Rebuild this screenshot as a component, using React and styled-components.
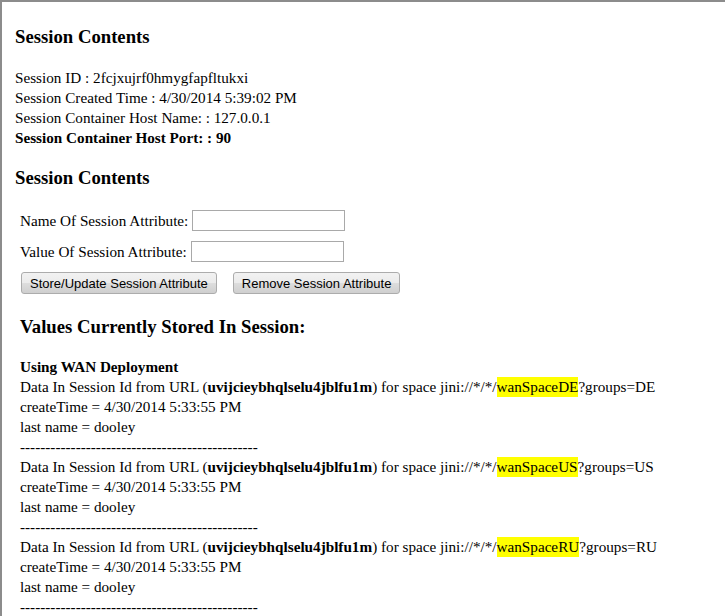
import React from "react";
import styled, { createGlobalStyle } from "styled-components";

const GlobalStyle = createGlobalStyle`
  html, body {
    margin: 0;
    padding: 0;
    background: #ffffff;
  }
  body {
    font-family: "Liberation Serif", "Times New Roman", serif;
    font-size: 15.2px;
    color: #000;
  }
`;

const Frame = styled.div`
  min-height: 100vh;
  box-sizing: border-box;
  border-top: 2px solid #8c8c8c;
  border-left: 2px solid #8c8c8c;
  padding: 24px 0 0 13px;
`;

const Heading = styled.h3`
  margin: ${(p) => p.$margin || "0"};
  font-size: 18.72px;
  line-height: 22px;
  font-weight: bold;
  padding-left: ${(p) => p.$indent || "0"};
`;

const Lines = styled.div`
  line-height: 20px;
  margin: ${(p) => p.$margin || "0"};
  padding-left: ${(p) => p.$indent || "0"};
`;

const Line = styled.div`
  font-weight: ${(p) => (p.$bold ? "bold" : "normal")};
  white-space: nowrap;
`;

const Form = styled.form`
  display: flex;
  flex-direction: column;
  gap: 10px;
  margin: 21px 0 0 5px;
`;

const FieldRow = styled.label`
  display: flex;
  align-items: center;
  gap: 4px;
  height: 21px;
  line-height: 20px;
`;

const TextInput = styled.input`
  box-sizing: border-box;
  width: 153px;
  height: 21px;
  border: 1px solid #a9a9a9;
  padding: 1px 3px;
  margin: 0;
  font-size: 13px;
  outline: none;
`;

const Buttons = styled.div`
  display: flex;
  gap: 16px;
  padding-left: 1px;
`;

const Button = styled.button`
  box-sizing: border-box;
  height: 22px;
  padding: 0 8px;
  margin: 0;
  border: 1px solid #acacac;
  border-radius: 3px;
  background: linear-gradient(#f2f2f2, #ebebeb 50%, #dddddd 51%, #cfcfcf);
  font-family: "Liberation Sans", Arial, sans-serif;
  font-size: 13px;
  color: #000;
  white-space: nowrap;
`;

const Mark = styled.span`
  background: #ffff00;
  padding: 1px 0 2px;
`;

const entries = ["DE", "US", "RU"];

const dashes = "-".repeat(47);

export default function App() {
  return (
    <>
      <GlobalStyle />
      <Frame>
        <Heading>Session Contents</Heading>
        <Lines $margin="20px 0 0 0">
          <Line>Session ID : 2fcjxujrf0hmygfapfltukxi</Line>
          <Line>Session Created Time : 4/30/2014 5:39:02 PM</Line>
          <Line>Session Container Host Name: : 127.0.0.1</Line>
          <Line $bold>Session Container Host Port: : 90</Line>
        </Lines>

        <Heading $margin="19px 0 0 0">Session Contents</Heading>
        <Form onSubmit={(e) => e.preventDefault()}>
          <FieldRow>
            Name Of Session Attribute: <TextInput type="text" />
          </FieldRow>
          <FieldRow>
            Value Of Session Attribute: <TextInput type="text" />
          </FieldRow>
          <Buttons>
            <Button type="button">Store/Update Session Attribute</Button>
            <Button type="button">Remove Session Attribute</Button>
          </Buttons>
        </Form>

        <Heading $margin="22px 0 0 0" $indent="5px">
          Values Currently Stored In Session:
        </Heading>
        <Lines $margin="19px 0 0 0" $indent="5px">
          <Line $bold>Using WAN Deployment</Line>
          {entries.map((code) => (
            <React.Fragment key={code}>
              <Line>
                Data In Session Id from URL (<b>uvijcieybhqlselu4jblfu1m</b>) for
                space jini://*/*/<Mark>wanSpace{code}</Mark>?groups={code}
              </Line>
              <Line>createTime = 4/30/2014 5:33:55 PM</Line>
              <Line>last name = dooley</Line>
              <Line>{dashes}</Line>
            </React.Fragment>
          ))}
        </Lines>
      </Frame>
    </>
  );
}
